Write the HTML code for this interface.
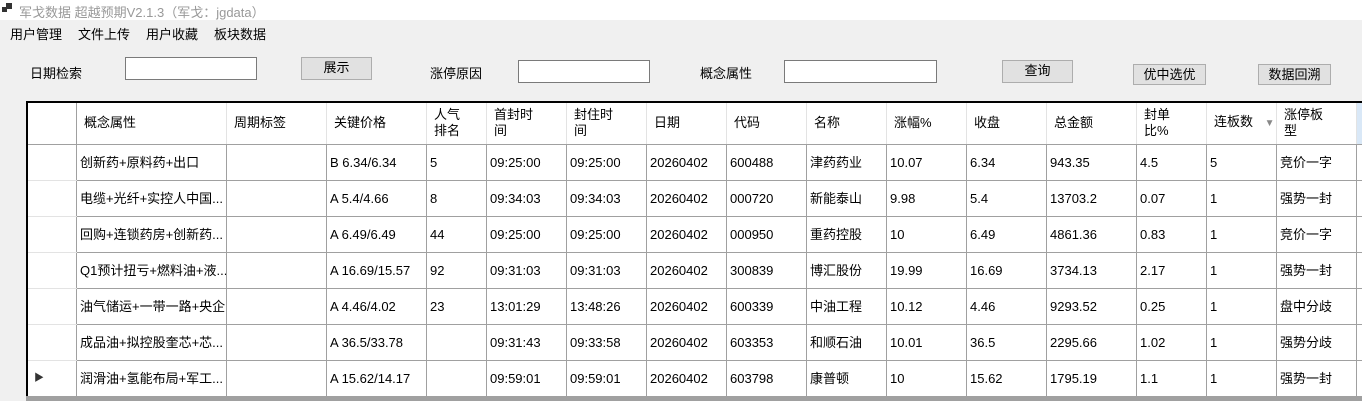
<!DOCTYPE html>
<html><head><meta charset="utf-8"><style>
*{margin:0;padding:0;box-sizing:border-box}
body{width:1362px;height:401px;overflow:hidden;background:#f0f0f0;font-family:"Liberation Sans","Noto Sans CJK SC",sans-serif;font-size:13px;color:#000;position:relative}
.a{position:absolute;white-space:nowrap}
.title{left:0;top:0;width:1362px;height:20px;background:#fff}
.in{position:absolute;background:#fff;border:1px solid #7a7a7a}
.btn{position:absolute;background:#e1e1e1;border:1px solid #adadad;text-align:center;line-height:19px}
.grid{position:absolute;left:26px;top:101px;width:1336px;height:295px;background:#fff;border-left:2px solid #000;border-top:2px solid #000;overflow:hidden}
table{border-collapse:collapse;table-layout:fixed;position:absolute;left:-1px;top:-1px;width:1349px}
td{border:1px solid #a0a0a0;height:36px;padding:0 0 0 3px;white-space:nowrap;overflow:hidden;vertical-align:middle;line-height:15px}
tr.h td{height:42px;border-top:none;border-right:1px solid #e3e3e3;border-bottom:1px solid #a0a0a0;padding-left:7px;line-height:16px}
td.rh{border-top:1px solid #e3e3e3;border-bottom:1px solid #e3e3e3;border-right:1px solid #a0a0a0}
.bot{position:absolute;left:26px;top:396px;width:1336px;height:5px;background:#a0a0a0}
</style></head><body>
<div class="a title"></div>
<div class="a" style="left:2px;top:7px;width:5px;height:5px;background:#333"></div>
<div class="a" style="left:6px;top:3px;width:6px;height:6px;background:#333"></div>
<div class="a" style="left:19px;top:2px;color:#999;font-size:13px">军戈数据 超越预期V2.1.3（军戈：jgdata）</div>
<div class="a" style="left:10px;top:24px">用户管理</div>
<div class="a" style="left:78px;top:24px">文件上传</div>
<div class="a" style="left:146px;top:24px">用户收藏</div>
<div class="a" style="left:214px;top:24px">板块数据</div>

<div class="a" style="left:30px;top:63px">日期检索</div>
<div class="in" style="left:125px;top:57px;width:132px;height:23px"></div>
<div class="btn" style="left:301px;top:57px;width:71px;height:23px">展示</div>
<div class="a" style="left:430px;top:63px">涨停原因</div>
<div class="in" style="left:518px;top:60px;width:132px;height:23px"></div>
<div class="a" style="left:700px;top:63px">概念属性</div>
<div class="in" style="left:784px;top:60px;width:153px;height:23px"></div>
<div class="btn" style="left:1002px;top:60px;width:71px;height:23px">查询</div>
<div class="btn" style="left:1133px;top:64px;width:73px;height:21px">优中选优</div>
<div class="btn" style="left:1258px;top:64px;width:73px;height:21px">数据回溯</div>

<div class="grid"><table>
<colgroup><col style="width:49px"><col style="width:150px"><col style="width:100px"><col style="width:100px"><col style="width:60px"><col style="width:80px"><col style="width:80px"><col style="width:80px"><col style="width:80px"><col style="width:80px"><col style="width:80px"><col style="width:80px"><col style="width:90px"><col style="width:70px"><col style="width:70px"><col style="width:80px"><col style="width:20px"></colgroup>
<tr class="h"><td style="border-right-color:#a0a0a0"></td><td>概念属性</td><td>周期标签</td><td>关键价格</td><td>人气<br>排名</td><td>首封时<br>间</td><td>封住时<br>间</td><td>日期</td><td>代码</td><td>名称</td><td>涨幅%</td><td>收盘</td><td>总金额</td><td>封单<br>比%</td><td>连板数 <span style="color:#888;font-size:10px;margin-left:8px">▼</span></td><td>涨停板<br>型</td><td style="background:#d9e8f7"></td></tr>
<tr><td class="rh"></td><td>创新药+原料药+出口</td><td></td><td>B 6.34/6.34</td><td>5</td><td>09:25:00</td><td>09:25:00</td><td>20260402</td><td>600488</td><td>津药药业</td><td>10.07</td><td>6.34</td><td>943.35</td><td>4.5</td><td>5</td><td>竞价一字</td><td></td></tr>
<tr><td class="rh"></td><td>电缆+光纤+实控人中国...</td><td></td><td>A 5.4/4.66</td><td>8</td><td>09:34:03</td><td>09:34:03</td><td>20260402</td><td>000720</td><td>新能泰山</td><td>9.98</td><td>5.4</td><td>13703.2</td><td>0.07</td><td>1</td><td>强势一封</td><td></td></tr>
<tr><td class="rh"></td><td>回购+连锁药房+创新药...</td><td></td><td>A 6.49/6.49</td><td>44</td><td>09:25:00</td><td>09:25:00</td><td>20260402</td><td>000950</td><td>重药控股</td><td>10</td><td>6.49</td><td>4861.36</td><td>0.83</td><td>1</td><td>竞价一字</td><td></td></tr>
<tr><td class="rh"></td><td>Q1预计扭亏+燃料油+液...</td><td></td><td>A 16.69/15.57</td><td>92</td><td>09:31:03</td><td>09:31:03</td><td>20260402</td><td>300839</td><td>博汇股份</td><td>19.99</td><td>16.69</td><td>3734.13</td><td>2.17</td><td>1</td><td>强势一封</td><td></td></tr>
<tr><td class="rh"></td><td>油气储运+一带一路+央企</td><td></td><td>A 4.46/4.02</td><td>23</td><td>13:01:29</td><td>13:48:26</td><td>20260402</td><td>600339</td><td>中油工程</td><td>10.12</td><td>4.46</td><td>9293.52</td><td>0.25</td><td>1</td><td>盘中分歧</td><td></td></tr>
<tr><td class="rh"></td><td>成品油+拟控股奎芯+芯...</td><td></td><td>A 36.5/33.78</td><td></td><td>09:31:43</td><td>09:33:58</td><td>20260402</td><td>603353</td><td>和顺石油</td><td>10.01</td><td>36.5</td><td>2295.66</td><td>1.02</td><td>1</td><td>强势分歧</td><td></td></tr>
<tr><td class="rh" style="padding-left:6px;font-size:10px;color:#333">▶</td><td>润滑油+氢能布局+军工...</td><td></td><td>A 15.62/14.17</td><td></td><td>09:59:01</td><td>09:59:01</td><td>20260402</td><td>603798</td><td>康普顿</td><td>10</td><td>15.62</td><td>1795.19</td><td>1.1</td><td>1</td><td>强势一封</td><td></td></tr>
</table></div>
<div class="bot"></div>
</body></html>
